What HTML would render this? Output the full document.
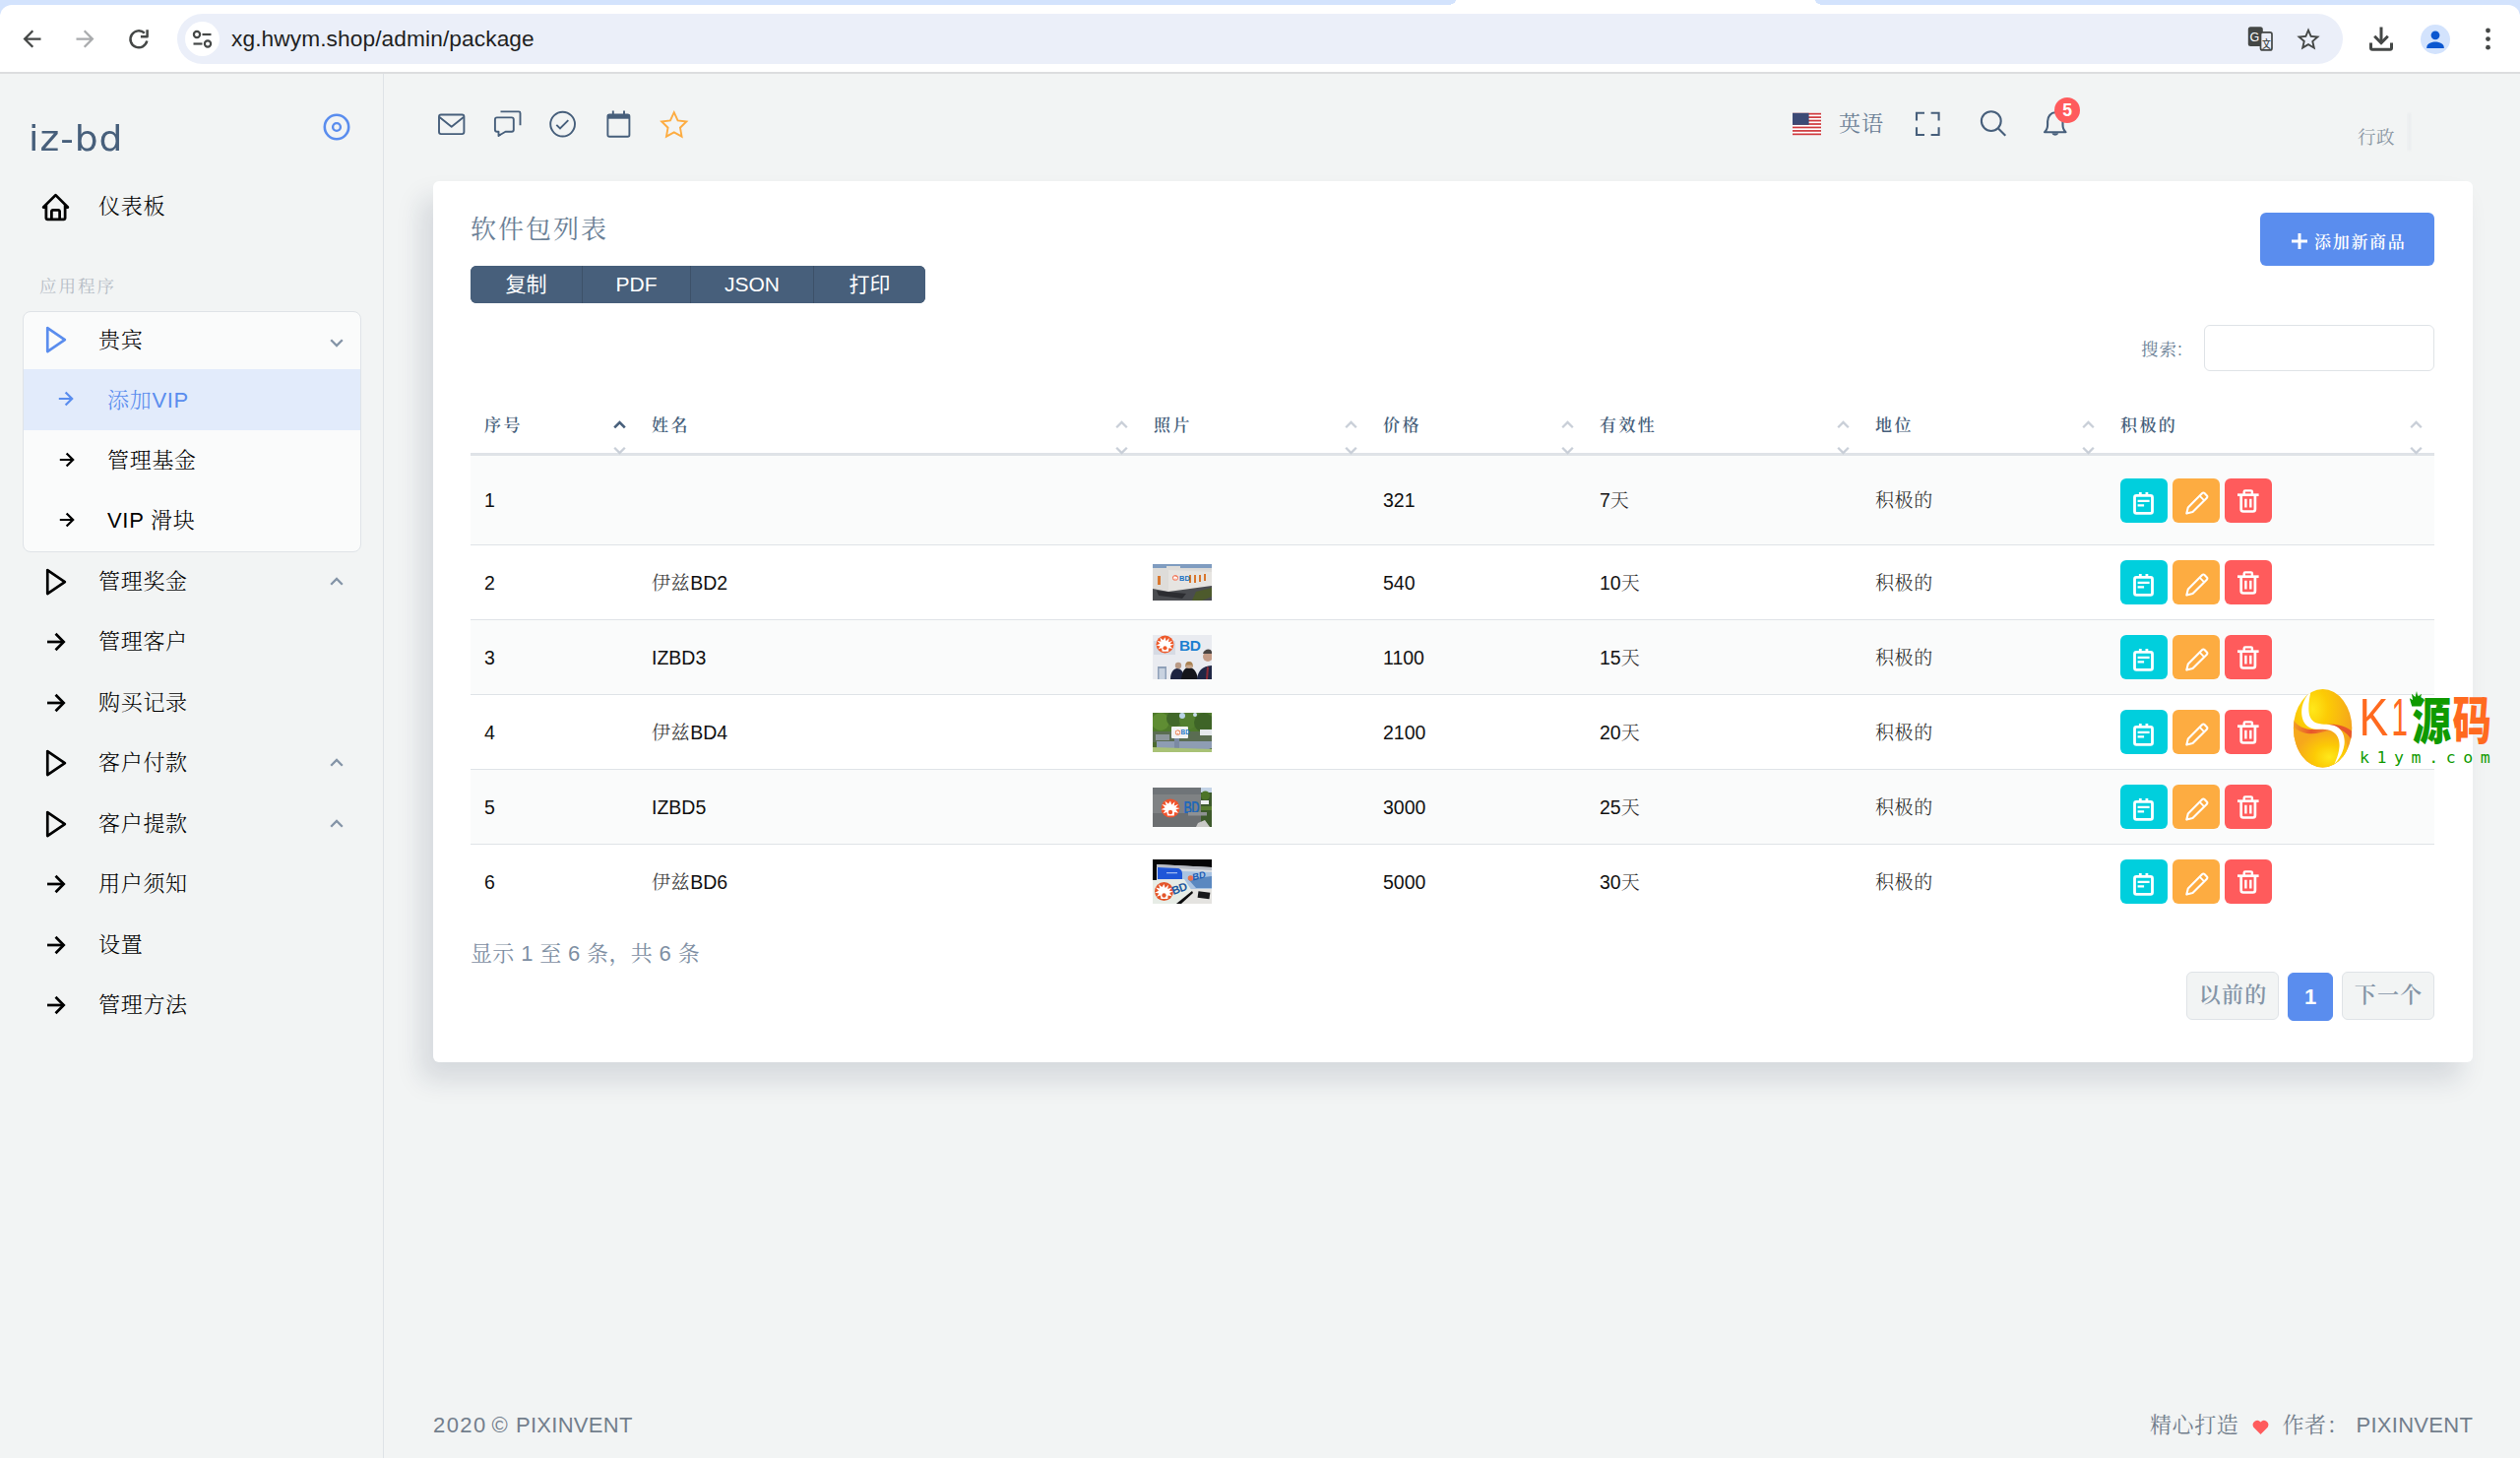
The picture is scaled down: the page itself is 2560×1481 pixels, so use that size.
<!DOCTYPE html>
<html lang="zh-CN">
<head>
<meta charset="utf-8">
<title>iz-bd - 软件包列表</title>
<style>
*{box-sizing:border-box;margin:0;padding:0}
html,body{width:2560px;height:1481px;overflow:hidden}
body{position:relative;background:#f2f4f4;font-family:"Liberation Sans","Noto Sans CJK SC",sans-serif;color:#111;-webkit-font-smoothing:antialiased}
.serif{font-family:"Liberation Sans","Noto Serif CJK SC",serif}
.abs{position:absolute}
svg{display:block;overflow:visible}

/* ---------- browser chrome ---------- */
#chrome{position:absolute;left:0;top:0;width:2560px;height:75px;background:#d3e3fd}
#chrome .bar{position:absolute;left:0;top:5px;width:2560px;height:69px;background:#fff;border-radius:12px 12px 0 0}
#chrome .tab{position:absolute;left:1479px;top:0;width:365px;height:10px;background:#fff}
#chrome .tabL{position:absolute;left:1471px;top:0;width:8px;height:5px;background:radial-gradient(ellipse 8px 5px at 0 0,#d3e3fd 96%,#fff 100%)}
#chrome .tabR{position:absolute;left:1844px;top:0;width:8px;height:5px;background:radial-gradient(ellipse 8px 5px at 100% 0,#d3e3fd 96%,#fff 100%)}
#chrome .line{position:absolute;left:0;top:73px;width:2560px;height:2px;background:#dcdddf}
#omni{position:absolute;left:180px;top:14px;width:2200px;height:51px;border-radius:26px;background:#ebeff9}
#omni .site{position:absolute;left:8px;top:8px;width:35px;height:35px;border-radius:50%;background:#fff}
#omni .url{position:absolute;left:55px;top:0;height:51px;line-height:50px;font-size:22.7px;color:#1f1f1f;letter-spacing:0.1px;white-space:nowrap}

/* ---------- sidebar ---------- */
#sidebar{position:absolute;left:0;top:75px;width:390px;height:1406px;border-right:1px solid #dfe3e7}
#brand{position:absolute;left:29px;top:37px;font-family:"DejaVu Sans","Liberation Sans",sans-serif;font-size:35px;line-height:56px;color:#475f7b;letter-spacing:.9px;transform:scaleX(1.075);transform-origin:0 0;margin-top:.8px}
.mi{position:absolute;left:0;width:390px;height:60px}
.mi .ic{position:absolute;left:41px;top:16px;width:28px;height:28px}
.mi .tx{position:absolute;left:100px;top:0;line-height:60px;font-size:22px;font-weight:300;color:#000;white-space:nowrap;letter-spacing:0.7px}
.mi .chev{position:absolute;left:335px;top:25px;width:14px;height:9px}
.mi.bx .chev{top:29px}
.mi.sub .ic{left:59.5px;top:21.5px;width:16px;height:16px}
.mi.sub .tx{left:109px}
.mi.active{background:#e2ebfb}
.mi.active .tx{color:#5a8dee}
.mi.bx{left:-24px}
.mi.bx.active{left:0;width:342px;margin-top:-1px;height:62px}
.mi.bx.active .tx{top:1px}
.mi.bx .tx{margin-top:.5px}
.mi.bx.active .ic{left:35px}.mi.bx.active .tx{left:85px}
.mi:not(.sub) .ic[viewBox="0 0 20 20"]{left:47px;top:20px;width:20px;height:20px}
#navhdr{position:absolute;left:40px;top:204px;font-size:17.5px;line-height:24px;color:#b6bdc6;letter-spacing:2px}
#vipbox{position:absolute;left:23px;top:241px;width:344px;height:245px;border:1px solid #dfe3e7;border-radius:8px;background:#fafbfb;overflow:hidden}

/* ---------- top navbar ---------- */
#topnav{position:absolute;left:390px;top:75px;width:2170px;height:109px}
#topnav .lang{position:absolute;left:1478px;top:34.5px;font-size:22px;line-height:32px;color:#6b7f96;letter-spacing:1px}
#topnav .user{position:absolute;left:2005px;top:51px;font-size:18.5px;line-height:28px;color:#8a96a3;letter-spacing:0.5px}
#badge{position:absolute;left:1697px;top:24px;width:26px;height:26px;border-radius:13px;background:#ff5b5c;color:#fff;font-size:17.5px;line-height:26px;text-align:center;font-weight:700}

/* ---------- card ---------- */
#card{position:absolute;left:440px;top:184px;width:2072px;height:895px;background:#fff;border-radius:6px;box-shadow:-12px 18px 27px 0 rgba(25,42,70,.13)}
#card h4{position:absolute;left:38px;top:30.5px;font-size:26px;line-height:36px;font-weight:400;color:#6b7f96;letter-spacing:2px}
#btns{position:absolute;left:38px;top:86px;height:38px;display:flex;border-radius:6px;overflow:hidden;background:#3d5169}
#btns span{display:block;height:38px;line-height:37px;text-align:center;color:#fff;font-size:21px;background:#475f7b;margin-right:1px}
#btns span:last-child{margin-right:0}
#addbtn{position:absolute;left:1856px;top:32px;width:177px;height:54px;border-radius:6px;background:#5a8dee;color:#fff}
#addbtn .t{position:absolute;left:55px;top:16px;font-size:17px;line-height:30px;font-weight:600;letter-spacing:1.7px;white-space:nowrap}
#srch{position:absolute;left:1799px;top:146px;width:234px;height:47px;border:1px solid #dfe3e7;border-radius:6px;background:#fff}
#srchl{position:absolute;left:1735px;top:155.5px;font-size:17.5px;line-height:30px;color:#6b7f96;letter-spacing:1px;white-space:nowrap}

table{position:absolute;left:38px;top:212px;width:1995px;border-collapse:separate;border-spacing:0;table-layout:fixed}
th{height:67px;text-align:left;padding:5px 0 0 14px;font-size:17px;font-weight:600;color:#475f7b;letter-spacing:2.4px;border-bottom:3px solid #dfe3e7;position:relative;vertical-align:middle}
th .s{position:absolute;right:12px;top:30px;width:13px;height:46px}
td{height:76px;line-height:24px;padding:0 0 0 14px;font-size:19.5px;color:#111;border-top:1px solid #dfe3e7;vertical-align:middle;white-space:nowrap}
tbody tr:first-child td{border-top:0;height:90px}
tbody tr:nth-child(odd){background:#fafbfb}
td .cj{font-family:"Noto Serif CJK SC",serif;font-weight:300;color:#2b2b2b;font-size:19px;letter-spacing:.6px;line-height:0}
td .acts{display:flex;gap:5px}
td .acts i{display:block;width:48px;height:45px;border-radius:6px;position:relative}
td .acts i svg{position:absolute;left:0;top:0;width:48px;height:45px}
.b1{background:#00cfdd}.b2{background:#fdac41}.b3{background:#ff5b5c}
.thumb{display:block;width:60px;overflow:hidden;margin-left:-1px}
#info{position:absolute;left:38px;top:766.5px;font-size:22px;line-height:36px;color:#7e8fa3;letter-spacing:0.35px;white-space:nowrap}
.pg{letter-spacing:1.3px;text-indent:1.3px;position:absolute;top:803px;height:49px;border-radius:6px;border:1px solid #dfe3e7;background:#f2f4f4;color:#8494a7;font-size:22px;font-weight:600;line-height:46px;text-align:center;white-space:nowrap}
.pg.on{background:#5a8dee;border-color:#5a8dee;color:#fff}

/* ---------- footer ---------- */
#foot{position:absolute;left:440px;top:1431px;width:2072px;height:34px;font-size:22px;line-height:34px;color:#727e8c}
#foot .f{position:absolute;top:0;white-space:nowrap}
</style>
</head>
<body>

<!-- ================= browser chrome ================= -->
<div id="chrome">
  <div class="bar"></div>
  <div class="tab"></div>
  <div class="tabL"></div>
  <div class="tabR"></div>
  <div id="omni">
    <div class="site"></div><svg class="abs" style="left:8px;top:8px" width="35" height="35" viewBox="0 0 35 35"><g fill="none" stroke="#444746" stroke-width="2.200"><circle cx="12" cy="13" r="3.100"/><path d="M17.500 13h9"/><circle cx="23" cy="22.500" r="3.100"/><path d="M8.500 22.500h9"/></g></svg>
    <div class="url">xg.hwym.shop/admin/package</div>
  </div>
  <div class="line"></div>
  <svg class="abs" style="left:18.800px;top:25.500px" width="27" height="27" viewBox="0 0 24 24"><path fill="#444746" d="M20 11H7.83l5.59-5.59L12 4l-8 8 8 8 1.41-1.41L7.83 13H20v-2z"/></svg>
  <svg class="abs" style="left:73px;top:25.500px" width="27" height="27" viewBox="0 0 24 24"><path fill="#a9abad" d="M12 4l-1.41 1.41L16.17 11H4v2h12.17l-5.58 5.59L12 20l8-8z"/></svg>
  <svg class="abs" style="left:125px;top:25px" width="30" height="30" viewBox="125 25 30 30"><g fill="none" stroke="#444746" stroke-width="2.500" stroke-linejoin="round"><path d="M149.300 41.600A8.500 8.500 0 1 1 146.800 33.600"/><path d="M149.600 30.300V37.300H142.900"/></g></svg>
  <svg class="abs" style="left:2330.500px;top:25.500px" width="28" height="28" viewBox="0 0 24 24"><path fill="#444746" d="M22 9.24l-7.19-.62L12 2 9.19 8.63 2 9.24l5.46 4.73L5.82 21 12 17.27 18.18 21l-1.63-7.03L22 9.24zM12 15.4l-3.76 2.27 1-4.28-3.32-2.88 4.38-.38L12 6.1l1.71 4.04 4.38.38-3.32 2.88 1 4.28L12 15.4z"/></svg>
  <svg class="abs" style="left:2405px;top:25px" width="28" height="28" viewBox="0 0 28 28"><g fill="none" stroke="#444746" stroke-width="3"><path d="M14 2.500v16"/><path d="M7.200 11.800l6.800 6.800 6.800-6.800" stroke-linejoin="miter"/><path d="M3.500 18.500v5.200a1.500 1.500 0 0 0 1.500 1.500h18a1.500 1.500 0 0 0 1.500-1.500v-5.200"/></g></svg>
  <div class="abs" style="left:2459px;top:25px;width:30px;height:30px;border-radius:50%;background:#d3e3fd"></div>
  <svg class="abs" style="left:2459px;top:25px" width="30" height="30" viewBox="0 0 30 30"><circle cx="15" cy="10.8" r="4.4" fill="#0b57d0"/><path fill="#0b57d0" d="M6.2 23.2c0-4.2 5.8-5.7 8.800-5.700s8.800 1.500 8.800 5.700v.8H6.200z"/></svg>
  <svg class="abs" style="left:2521px;top:25px" width="12" height="30" viewBox="0 0 12 30"><g fill="#444746"><circle cx="6.500" cy="6" r="2.400"/><circle cx="6.500" cy="14.600" r="2.400"/><circle cx="6.500" cy="23.200" r="2.400"/></g></svg>
  <svg class="abs" style="left:2283px;top:26px" width="28" height="28" viewBox="0 0 28 28"><rect x=".800" y="1.300" width="15" height="19.600" rx="2.500" fill="#444746"/><rect x="13.500" y="6.900" width="11.500" height="18" rx="2" fill="#ebeff9" stroke="#444746" stroke-width="1.700"/><text x="2.400" y="16.100" font-family="Liberation Sans,sans-serif" font-weight="400" font-size="12.500" fill="#fff">G</text><text transform="translate(14.900 22.600) scale(1 1.300)" font-family="Liberation Sans,Noto Sans CJK SC,sans-serif" font-weight="500" font-size="8.800" fill="#444746">文</text></svg>
</div>

<!-- ================= sidebar ================= -->
<aside id="sidebar">
  <div id="brand">iz-bd</div>
  <svg class="abs" style="left:327px;top:39px" width="30" height="30" viewBox="0 0 30 30"><g fill="none" stroke="#5a8dee"><circle cx="15" cy="15" r="12.200" stroke-width="2.600"/><circle cx="15" cy="15" r="3.900" stroke-width="2.400"/></g></svg>
  <div class="mi" style="top:105px"><svg class="ic" style="left:40px;top:13.500px;width:33px;height:33px" viewBox="0 0 24 24"><path fill="#000" d="M3 13h1v7c0 1.103.897 2 2 2h12c1.103 0 2-.897 2-2v-7h1a1 1 0 0 0 .707-1.707l-9-9a.999.999 0 0 0-1.414 0l-9 9A1 1 0 0 0 3 13zm7 7v-5h4v5h-4zm2-15.586 6 6V15l.001 5H16v-5c0-1.103-.897-2-2-2h-4c-1.103 0-2 .897-2 2v5H6v-9.586l6-6z"/></svg><span class="tx serif">仪表板</span></div>
  <div id="navhdr" class="serif">应用程序</div>
  <div id="vipbox">
    <div class="mi bx" style="top:-2px"><svg class="ic" viewBox="0 0 28 28"><path d="M7.250 2.100v24l17.600-12z" fill="none" stroke="#5a8dee" stroke-width="2.700" stroke-linejoin="round"/></svg><span class="tx serif">贵宾</span><svg class="chev" viewBox="0 0 14 9"><path d="M1.200 1.200l5.800 5.800 5.800-5.800" fill="none" stroke="#8494a7" stroke-width="2.300"/></svg></div>
    <div class="mi bx sub active" style="top:59px"><svg class="ic" viewBox="0 0 20 20"><g fill="none" stroke="#5a8dee" stroke-width="2.800"><path d="M1 10h16.500"/><path d="M9.500 1.800l8.200 8.200-8.200 8.200"/></g></svg><span class="tx serif">添加VIP</span></div>
    <div class="mi bx sub" style="top:120px"><svg class="ic" viewBox="0 0 20 20"><g fill="none" stroke="#000" stroke-width="2.800"><path d="M1 10h16.500"/><path d="M9.500 1.800l8.200 8.200-8.200 8.200"/></g></svg><span class="tx serif">管理基金</span></div>
    <div class="mi bx sub" style="top:181px"><svg class="ic" viewBox="0 0 20 20"><g fill="none" stroke="#000" stroke-width="2.800"><path d="M1 10h16.500"/><path d="M9.500 1.800l8.200 8.200-8.200 8.200"/></g></svg><span class="tx serif">VIP 滑块</span></div>
  </div>
  <div class="mi" style="top:486px"><svg class="ic" viewBox="0 0 28 28"><path d="M7.250 2.100v24l17.600-12z" fill="none" stroke="#000" stroke-width="2.700" stroke-linejoin="round"/></svg><span class="tx serif">管理奖金</span><svg class="chev" viewBox="0 0 14 9"><path d="M1.200 7.800l5.800-5.800 5.800 5.800" fill="none" stroke="#8494a7" stroke-width="2.300"/></svg></div>
  <div class="mi" style="top:547px"><svg class="ic" viewBox="0 0 20 20"><g fill="none" stroke="#000" stroke-width="2.700"><path d="M1 10h16.500"/><path d="M9.500 1.800l8.200 8.200-8.200 8.200"/></g></svg><span class="tx serif">管理客户</span></div>
  <div class="mi" style="top:609px"><svg class="ic" viewBox="0 0 20 20"><g fill="none" stroke="#000" stroke-width="2.700"><path d="M1 10h16.500"/><path d="M9.500 1.800l8.200 8.200-8.200 8.200"/></g></svg><span class="tx serif">购买记录</span></div>
  <div class="mi" style="top:670px"><svg class="ic" viewBox="0 0 28 28"><path d="M7.250 2.100v24l17.600-12z" fill="none" stroke="#000" stroke-width="2.700" stroke-linejoin="round"/></svg><span class="tx serif">客户付款</span><svg class="chev" viewBox="0 0 14 9"><path d="M1.200 7.800l5.800-5.800 5.800 5.800" fill="none" stroke="#8494a7" stroke-width="2.300"/></svg></div>
  <div class="mi" style="top:732px"><svg class="ic" viewBox="0 0 28 28"><path d="M7.250 2.100v24l17.600-12z" fill="none" stroke="#000" stroke-width="2.700" stroke-linejoin="round"/></svg><span class="tx serif">客户提款</span><svg class="chev" viewBox="0 0 14 9"><path d="M1.200 7.800l5.800-5.800 5.800 5.800" fill="none" stroke="#8494a7" stroke-width="2.300"/></svg></div>
  <div class="mi" style="top:793px"><svg class="ic" viewBox="0 0 20 20"><g fill="none" stroke="#000" stroke-width="2.700"><path d="M1 10h16.500"/><path d="M9.500 1.800l8.200 8.200-8.200 8.200"/></g></svg><span class="tx serif">用户须知</span></div>
  <div class="mi" style="top:855px"><svg class="ic" viewBox="0 0 20 20"><g fill="none" stroke="#000" stroke-width="2.700"><path d="M1 10h16.500"/><path d="M9.500 1.800l8.200 8.200-8.200 8.200"/></g></svg><span class="tx serif">设置</span></div>
  <div class="mi" style="top:916px"><svg class="ic" viewBox="0 0 20 20"><g fill="none" stroke="#000" stroke-width="2.700"><path d="M1 10h16.500"/><path d="M9.500 1.800l8.200 8.200-8.200 8.200"/></g></svg><span class="tx serif">管理方法</span></div>
</aside>

<!-- ================= top navbar ================= -->
<nav id="topnav">
  <svg class="abs" style="left:0;top:0" width="2170" height="109" viewBox="390 75 2170 109">
    <g fill="none" stroke="#475f7b" stroke-width="1.900" stroke-linejoin="round">
      <!-- mail -->
      <rect x="446" y="116.500" width="25.400" height="19.600" rx="2"/>
      <path d="M446.500 119l12.200 9.800 12.200-9.800"/>
      <!-- chat -->
      <path d="M508.500 113.400h18.500a1.500 1.500 0 0 1 1.500 1.500v12.300"/>
      <path d="M504.900 119.400h14.900a2 2 0 0 1 2 2v10.300a2 2 0 0 1-2 2h-6.300l-7 4.200v-4.200h-1.600a2 2 0 0 1-2-2v-10.300a2 2 0 0 1 2-2z"/>
      <!-- check circle -->
      <circle cx="571.600" cy="126.100" r="12.400"/>
      <path d="M565.300 126.800l3.700 3.700 8.300-8.300" stroke-linejoin="miter"/>
      <!-- calendar -->
      <rect x="617.400" y="116.400" width="22" height="22.300" rx="1.800"/>
      <path d="M622.800 112.500v4M634 112.500v4"/>
      <!-- fullscreen -->
      <g stroke-width="2.100" stroke-linejoin="miter"><path d="M1947 122.500v-7.700h8"/><path d="M1961.600 114.800h8v7.700"/><path d="M1969.600 129.300v7.700h-8"/><path d="M1955 137h-8v-7.700"/></g>
      <!-- search -->
      <circle cx="2022.800" cy="123.100" r="9.900" stroke-width="2.100"/>
      <path d="M2030 130.400l7.300 7.300" stroke-width="2.100"/>
      <!-- bell -->
      <path d="M2077 134.200c2.200-1.800 3.100-4.200 3.100-7.400v-3.600c0-4.800 3.300-8.900 7.700-8.900s7.700 4.100 7.700 8.900v3.600c0 3.200.900 5.600 3.100 7.400z" stroke-width="2.100"/>
    </g>
    <rect x="617.400" y="116.400" width="22" height="4.300" fill="#475f7b"/>
    <path d="M2084.400 135.200a3.500 3.500 0 0 0 6.800 0z" fill="#475f7b"/>
    <!-- star -->
    <path d="M684.750 114.200l3.800 8.200 8.800 1.100-6.400 6.200 1.600 8.900-7.800-4.300-7.800 4.300 1.600-8.900-6.400-6.200 8.800-1.100z" fill="none" stroke="#fdac41" stroke-width="1.900" stroke-linejoin="miter"/>
    <!-- flag -->
    <g>
      <rect x="1821" y="114.800" width="29" height="22.400" fill="#fff"/>
      <g fill="#cf3a3e"><rect x="1821" y="114.800" width="29" height="1.720"/><rect x="1821" y="118.250" width="29" height="1.720"/><rect x="1821" y="121.700" width="29" height="1.720"/><rect x="1821" y="125.150" width="29" height="1.720"/><rect x="1821" y="128.600" width="29" height="1.720"/><rect x="1821" y="132.050" width="29" height="1.720"/><rect x="1821" y="135.500" width="29" height="1.720"/></g>
      <rect x="1821" y="114.800" width="16.600" height="12.050" fill="#3c4a75"/>
    </g>
  </svg>
  <span class="lang serif">英语</span>
  <div id="badge">5</div>
  <span class="user serif">行政</span>
  <div class="abs" style="left:2056px;top:40px;width:3px;height:38px;background:rgba(190,198,210,.16);filter:blur(1px)"></div>
</nav>

<!-- ================= card ================= -->
<section id="card">
  <h4 class="serif">软件包列表</h4>
  <div id="btns"><span style="width:113px">复制</span><span style="width:109px">PDF</span><span style="width:124px">JSON</span><span style="width:113px">打印</span></div>
  <div id="addbtn"><svg class="abs" style="left:32px;top:20.500px" width="16" height="16" viewBox="0 0 16 16"><path d="M8 0v16M0 8h16" stroke="#fff" stroke-width="3" fill="none"/></svg><span class="t serif">添加新商品</span></div>
  <label id="srchl" class="serif">搜索:</label>
  <div id="srch"></div>
  <table>
    <thead><tr><th class="serif" style="width:170px">序号<svg class="s" viewBox="0 0 13 46"><path d="M1.200 8.300l5.300-5.300 5.300 5.300" fill="none" stroke="#475f7b" stroke-width="2.600"/><path d="M1.200 28.800l5.300 5.300 5.300-5.300" fill="none" stroke="#c9cfd8" stroke-width="2.300"/></svg></th><th class="serif" style="width:510px">姓名<svg class="s" viewBox="0 0 13 46"><path d="M1.200 8.300l5.300-5.300 5.300 5.300" fill="none" stroke="#c9cfd8" stroke-width="2.300"/><path d="M1.200 28.800l5.300 5.300 5.300-5.300" fill="none" stroke="#c9cfd8" stroke-width="2.300"/></svg></th><th class="serif" style="width:233px">照片<svg class="s" viewBox="0 0 13 46"><path d="M1.200 8.300l5.300-5.300 5.300 5.300" fill="none" stroke="#c9cfd8" stroke-width="2.300"/><path d="M1.200 28.800l5.300 5.300 5.300-5.300" fill="none" stroke="#c9cfd8" stroke-width="2.300"/></svg></th><th class="serif" style="width:220px">价格<svg class="s" viewBox="0 0 13 46"><path d="M1.200 8.300l5.300-5.300 5.300 5.300" fill="none" stroke="#c9cfd8" stroke-width="2.300"/><path d="M1.200 28.800l5.300 5.300 5.300-5.300" fill="none" stroke="#c9cfd8" stroke-width="2.300"/></svg></th><th class="serif" style="width:280px">有效性<svg class="s" viewBox="0 0 13 46"><path d="M1.200 8.300l5.300-5.300 5.300 5.300" fill="none" stroke="#c9cfd8" stroke-width="2.300"/><path d="M1.200 28.800l5.300 5.300 5.300-5.300" fill="none" stroke="#c9cfd8" stroke-width="2.300"/></svg></th><th class="serif" style="width:249px">地位<svg class="s" viewBox="0 0 13 46"><path d="M1.200 8.300l5.300-5.300 5.300 5.300" fill="none" stroke="#c9cfd8" stroke-width="2.300"/><path d="M1.200 28.800l5.300 5.300 5.300-5.300" fill="none" stroke="#c9cfd8" stroke-width="2.300"/></svg></th><th class="serif" style="width:333px">积极的<svg class="s" viewBox="0 0 13 46"><path d="M1.200 8.300l5.300-5.300 5.300 5.300" fill="none" stroke="#c9cfd8" stroke-width="2.300"/><path d="M1.200 28.800l5.300 5.300 5.300-5.300" fill="none" stroke="#c9cfd8" stroke-width="2.300"/></svg></th></tr></thead>
    <tbody>
      <tr><td>1</td><td></td><td></td><td>321</td><td>7<span class="cj">天</span></td><td><span class="cj">积极的</span></td><td><div class="acts"><i class="b1"><svg viewBox="0 0 48 45"><g fill="none" stroke="#fff"><rect x="14.500" y="17.400" width="18" height="18" rx="1.800" stroke-width="2.800"/><path d="M20.300 14v3.500M26.900 14v3.500" stroke-width="2.800"/><path d="M17.600 22.900h12M17.600 27.400h6.500" stroke-width="2.300"/></g></svg></i><i class="b2"><svg viewBox="0 0 48 45"><g fill="none" stroke="#fff" stroke-width="2.100" stroke-linejoin="round"><path d="M15.800 29.400L30.200 15a1.600 1.600 0 0 1 2.300 0l2.400 2.400a1.600 1.600 0 0 1 0 2.300L20.500 34.100l-6.200 1.500z"/><path d="M27.600 17.700l4.600 4.600" stroke-width="1.800"/></g></svg></i><i class="b3"><svg viewBox="0 0 48 45"><g fill="none" stroke="#fff"><path d="M13 16.700h21.600" stroke-width="2.700"/><path d="M19.700 16v-2.400a1.200 1.200 0 0 1 1.200-1.200h5.800a1.200 1.200 0 0 1 1.200 1.200v2.400" stroke-width="2.400"/><path d="M16.700 17.500v13.800a2.200 2.200 0 0 0 2.200 2.200h9.800a2.200 2.200 0 0 0 2.200-2.200v-13.800" stroke-width="2.700"/><path d="M21.400 20.800v8.600M26.300 20.800v8.600" stroke-width="2.400"/></g></svg></i></div></td></tr>
      <tr><td>2</td><td><span class="cj">伊兹</span>BD2</td><td><svg class="thumb" width="60" height="37" viewBox="0 0 60 37"><rect width="60" height="37" fill="#d9d8d6"/><rect width="60" height="4" fill="#7f9cc0"/><path d="M0 4h14v-2h14v3l32 1v17L16 28 0 25z" fill="#dedcd9"/><path d="M16 6l44 2v14L16 27z" fill="#e6e4e1"/><path d="M0 25l16 3 44-6v15H0z" fill="#4a4c50"/><path d="M44 28l16-4v9l-10 4H40z" fill="#4d5a2c"/><path d="M4 27l30 3-4 5-24-3z" fill="#2c2d31"/><g fill="#d9772e"><rect x="5" y="12" width="3" height="9"/><rect x="37" y="11" width="2" height="8"/><rect x="42" y="11" width="2" height="8"/><rect x="47" y="11" width="2" height="7"/><rect x="52" y="10" width="2" height="7"/></g><g transform="translate(23,14) scale(0.28)"><circle r="10" fill="#f0542d"/><path fill="#fff" d="M0-8l1.300 4.300 3.400-3.400-.8 4.500 4.600-1.700-2.900 3.600 4.400.6-4.200 1.800 2.700 3.300-4.300-.9-.2 3.900H-3.200l-.6-3.900-4 1.500 2.400-3.500-4.400-.9 4.100-2-3.300-3.300 4.500 1-1.300-4.600 3.600 3z"/><circle cy="4.200" r="2.300" fill="#f0542d"/></g><text x="27" y="17" font-family="Liberation Sans,sans-serif" font-weight="700" font-size="7.500" fill="#1c73c4">BD</text></svg></td><td>540</td><td>10<span class="cj">天</span></td><td><span class="cj">积极的</span></td><td><div class="acts"><i class="b1"><svg viewBox="0 0 48 45"><g fill="none" stroke="#fff"><rect x="14.500" y="17.400" width="18" height="18" rx="1.800" stroke-width="2.800"/><path d="M20.300 14v3.500M26.900 14v3.500" stroke-width="2.800"/><path d="M17.600 22.900h12M17.600 27.400h6.500" stroke-width="2.300"/></g></svg></i><i class="b2"><svg viewBox="0 0 48 45"><g fill="none" stroke="#fff" stroke-width="2.100" stroke-linejoin="round"><path d="M15.800 29.400L30.200 15a1.600 1.600 0 0 1 2.300 0l2.400 2.400a1.600 1.600 0 0 1 0 2.300L20.500 34.100l-6.200 1.500z"/><path d="M27.600 17.700l4.600 4.600" stroke-width="1.800"/></g></svg></i><i class="b3"><svg viewBox="0 0 48 45"><g fill="none" stroke="#fff"><path d="M13 16.700h21.600" stroke-width="2.700"/><path d="M19.700 16v-2.400a1.200 1.200 0 0 1 1.200-1.200h5.800a1.200 1.200 0 0 1 1.200 1.200v2.400" stroke-width="2.400"/><path d="M16.700 17.500v13.800a2.200 2.200 0 0 0 2.200 2.200h9.800a2.200 2.200 0 0 0 2.200-2.200v-13.800" stroke-width="2.700"/><path d="M21.400 20.800v8.600M26.300 20.800v8.600" stroke-width="2.400"/></g></svg></i></div></td></tr>
      <tr><td>3</td><td>IZBD3</td><td><svg class="thumb" width="60" height="45" viewBox="0 0 60 45"><rect width="60" height="45" fill="#e9ebf0"/><rect x="1" y="6" width="22" height="14" fill="#d6dae3"/><g transform="translate(12.5,9.5) scale(0.9)"><circle r="10" fill="#ee5a2b"/><path fill="#fff" d="M0-8l1.300 4.300 3.400-3.400-.8 4.500 4.600-1.700-2.900 3.600 4.400.6-4.200 1.800 2.700 3.300-4.300-.9-.2 3.900H-3.200l-.6-3.900-4 1.500 2.400-3.500-4.400-.9 4.100-2-3.300-3.300 4.500 1-1.300-4.600 3.600 3z"/><circle cy="4.200" r="2.300" fill="#ee5a2b"/></g><text x="27" y="16" font-family="Liberation Sans,sans-serif" font-weight="700" font-size="15.500" fill="#1b7fd0" letter-spacing="-.5">BD</text><rect x="5" y="32" width="9" height="13" fill="#8fa0b8"/><rect x="6.500" y="34" width="6" height="11" fill="#c8d2e0"/><path d="M18 45c0-7 3-11 7-11s7 4 7 11z" fill="#1d2440"/><circle cx="26" cy="31" r="3.200" fill="#b99a86"/><path d="M29 45c1-8 3-12 8-12s8 5 9 12z" fill="#15161b"/><circle cx="37" cy="30.500" r="3.600" fill="#c9a78d"/><path d="M33.500 30c0-4 7-4 7 0l.5 4-1.500-3.500h-5L33 34z" fill="#a98251"/><path d="M45 45c1-9 5-13 15-14v14z" fill="#1f2745"/><circle cx="56" cy="22" r="5" fill="#c49c87"/><path d="M51 19c1-5 8-6 9-2v2z" fill="#4a4542"/><path d="M55 32l2 1-1 12h-2z" fill="#8c2a35"/></svg></td><td>1100</td><td>15<span class="cj">天</span></td><td><span class="cj">积极的</span></td><td><div class="acts"><i class="b1"><svg viewBox="0 0 48 45"><g fill="none" stroke="#fff"><rect x="14.500" y="17.400" width="18" height="18" rx="1.800" stroke-width="2.800"/><path d="M20.300 14v3.500M26.900 14v3.500" stroke-width="2.800"/><path d="M17.600 22.900h12M17.600 27.400h6.500" stroke-width="2.300"/></g></svg></i><i class="b2"><svg viewBox="0 0 48 45"><g fill="none" stroke="#fff" stroke-width="2.100" stroke-linejoin="round"><path d="M15.800 29.400L30.200 15a1.600 1.600 0 0 1 2.300 0l2.400 2.400a1.600 1.600 0 0 1 0 2.300L20.500 34.100l-6.200 1.500z"/><path d="M27.600 17.700l4.600 4.600" stroke-width="1.800"/></g></svg></i><i class="b3"><svg viewBox="0 0 48 45"><g fill="none" stroke="#fff"><path d="M13 16.700h21.600" stroke-width="2.700"/><path d="M19.700 16v-2.400a1.200 1.200 0 0 1 1.200-1.200h5.800a1.200 1.200 0 0 1 1.200 1.200v2.400" stroke-width="2.400"/><path d="M16.700 17.500v13.800a2.200 2.200 0 0 0 2.200 2.200h9.800a2.200 2.200 0 0 0 2.200-2.200v-13.800" stroke-width="2.700"/><path d="M21.400 20.800v8.600M26.300 20.800v8.600" stroke-width="2.400"/></g></svg></i></div></td></tr>
      <tr><td>4</td><td><span class="cj">伊兹</span>BD4</td><td><svg class="thumb" width="60" height="40" viewBox="0 0 60 40"><rect width="60" height="40" fill="#4c6b2e"/><path d="M0 0h60v22H0z" fill="#4f7a2c"/><circle cx="8" cy="9" r="9" fill="#5f8d33"/><circle cx="22" cy="6" r="8" fill="#41682a"/><circle cx="36" cy="8" r="9" fill="#537f30"/><circle cx="52" cy="10" r="10" fill="#3e6427"/><circle cx="30" cy="3" r="3" fill="#b9d3e6"/><circle cx="43" cy="2" r="2" fill="#c9dcec"/><path d="M0 19h60v11H0z" fill="#5a6d52"/><rect x="48" y="17" width="12" height="6" fill="#e4e8ec"/><rect x="3" y="22" width="14" height="6" fill="#8d979c"/><rect x="19" y="14" width="17" height="12" rx="1" fill="#f1f2f4"/><g transform="translate(25.5,20) scale(0.26)"><circle r="10" fill="#e8682f"/><path fill="#fff" d="M0-8l1.300 4.300 3.400-3.400-.8 4.500 4.600-1.700-2.900 3.600 4.400.6-4.200 1.800 2.700 3.300-4.300-.9-.2 3.900H-3.200l-.6-3.900-4 1.500 2.400-3.500-4.400-.9 4.100-2-3.300-3.300 4.500 1-1.300-4.600 3.600 3z"/><circle cy="4.200" r="2.300" fill="#e8682f"/></g><text x="28.500" y="22.300" font-family="Liberation Sans,sans-serif" font-weight="700" font-size="6.500" fill="#2a7ac6">BD</text><path d="M4 29h18v-3h4v3h34v7l-6 2H4z" fill="#8e9db3"/><path d="M22 26h5v10h-5z" fill="#7b8aa3"/><path d="M0 35l60 2v3H0z" fill="#a9c276"/></svg></td><td>2100</td><td>20<span class="cj">天</span></td><td><span class="cj">积极的</span></td><td><div class="acts"><i class="b1"><svg viewBox="0 0 48 45"><g fill="none" stroke="#fff"><rect x="14.500" y="17.400" width="18" height="18" rx="1.800" stroke-width="2.800"/><path d="M20.300 14v3.500M26.900 14v3.500" stroke-width="2.800"/><path d="M17.600 22.900h12M17.600 27.400h6.500" stroke-width="2.300"/></g></svg></i><i class="b2"><svg viewBox="0 0 48 45"><g fill="none" stroke="#fff" stroke-width="2.100" stroke-linejoin="round"><path d="M15.800 29.400L30.200 15a1.600 1.600 0 0 1 2.300 0l2.400 2.400a1.600 1.600 0 0 1 0 2.300L20.500 34.100l-6.200 1.500z"/><path d="M27.600 17.700l4.600 4.600" stroke-width="1.800"/></g></svg></i><i class="b3"><svg viewBox="0 0 48 45"><g fill="none" stroke="#fff"><path d="M13 16.700h21.600" stroke-width="2.700"/><path d="M19.700 16v-2.400a1.200 1.200 0 0 1 1.200-1.200h5.800a1.200 1.200 0 0 1 1.200 1.200v2.400" stroke-width="2.400"/><path d="M16.700 17.500v13.800a2.200 2.200 0 0 0 2.200 2.200h9.800a2.200 2.200 0 0 0 2.200-2.200v-13.800" stroke-width="2.700"/><path d="M21.400 20.800v8.600M26.300 20.800v8.600" stroke-width="2.400"/></g></svg></i></div></td></tr>
      <tr><td>5</td><td>IZBD5</td><td><svg class="thumb" width="60" height="40" viewBox="0 0 60 40"><rect width="60" height="40" fill="#777a7c"/><path d="M0 0h49v40H0z" fill="#7f8284"/><path d="M0 26h49v14H0z" fill="#6c6f71"/><path d="M0 0h49v7H0z" fill="#6f7478"/><rect x="49" y="0" width="11" height="40" fill="#3d5a2c"/><rect x="49" y="0" width="11" height="5" fill="#c4d4e6"/><circle cx="53.500" cy="8" r="4.500" fill="#4c7428"/><rect x="49" y="13" width="8" height="4" fill="#eef0f2"/><rect x="49" y="19" width="11" height="4" fill="#587c30"/><path d="M46 36l7-3 5 7H44z" fill="#c9c9c7"/><g transform="translate(18,21) scale(0.95)"><circle r="10" fill="#f0532c"/><path fill="#fff" d="M0-8l1.300 4.300 3.400-3.400-.8 4.500 4.600-1.700-2.900 3.600 4.400.6-4.200 1.800 2.700 3.300-4.300-.9-.2 3.900H-3.200l-.6-3.900-4 1.500 2.400-3.500-4.400-.9 4.100-2-3.300-3.300 4.500 1-1.300-4.600 3.600 3z"/><circle cy="4.200" r="2.300" fill="#f0532c"/></g><text transform="translate(31.500 26) scale(.680 1)" font-family="Liberation Sans,sans-serif" font-weight="700" font-size="17" fill="#2268b8" letter-spacing="-.8">BD</text><rect x="36" y="25" width="19" height="3.500" fill="#8e9194"/></svg></td><td>3000</td><td>25<span class="cj">天</span></td><td><span class="cj">积极的</span></td><td><div class="acts"><i class="b1"><svg viewBox="0 0 48 45"><g fill="none" stroke="#fff"><rect x="14.500" y="17.400" width="18" height="18" rx="1.800" stroke-width="2.800"/><path d="M20.300 14v3.500M26.900 14v3.500" stroke-width="2.800"/><path d="M17.600 22.900h12M17.600 27.400h6.500" stroke-width="2.300"/></g></svg></i><i class="b2"><svg viewBox="0 0 48 45"><g fill="none" stroke="#fff" stroke-width="2.100" stroke-linejoin="round"><path d="M15.800 29.400L30.200 15a1.600 1.600 0 0 1 2.300 0l2.400 2.400a1.600 1.600 0 0 1 0 2.300L20.500 34.100l-6.200 1.500z"/><path d="M27.600 17.700l4.600 4.600" stroke-width="1.800"/></g></svg></i><i class="b3"><svg viewBox="0 0 48 45"><g fill="none" stroke="#fff"><path d="M13 16.700h21.600" stroke-width="2.700"/><path d="M19.700 16v-2.400a1.200 1.200 0 0 1 1.200-1.200h5.800a1.200 1.200 0 0 1 1.200 1.200v2.400" stroke-width="2.400"/><path d="M16.700 17.500v13.800a2.200 2.200 0 0 0 2.200 2.200h9.800a2.200 2.200 0 0 0 2.200-2.200v-13.800" stroke-width="2.700"/><path d="M21.400 20.800v8.600M26.300 20.800v8.600" stroke-width="2.400"/></g></svg></i></div></td></tr>
      <tr><td>6</td><td><span class="cj">伊兹</span>BD6</td><td><svg class="thumb" width="60" height="45" viewBox="0 0 60 45"><rect width="60" height="45" fill="#050506"/><path d="M4 5l56 3v37H4z" fill="#d9dde2"/><path d="M4 5l56 3v3L4 8z" fill="#b8bcc4"/><path d="M5 8l20 1a5 5 0 0 1 5 5v6H5z" fill="#1f56d8"/><rect x="14" y="13" width="11" height="1.300" fill="#9db7f0"/><path d="M30 12l30 1v20H30z" fill="#a9c3e2"/><path d="M36 20l24-3v12H44z" fill="#5b88c0"/><circle cx="38.500" cy="19" r="2.800" fill="#e9734a"/><text x="41" y="21.500" font-family="Liberation Sans,sans-serif" font-weight="700" font-style="italic" font-size="9.500" fill="#1d5cb4" transform="rotate(-14 41 21)">BD</text><path d="M30 30h30v15H30z" fill="#e4e3e0"/><rect x="46" y="33" width="12" height="6.500" fill="#17181a" transform="rotate(8 52 36)"/><path d="M0 21l32-1 8 12-16 13H0z" fill="#e7ece6"/><path d="M24 45l16-13 1 2-12 11z" fill="#0c0c0d"/><g transform="translate(11.5,32.5) scale(0.95)"><circle r="10" fill="#e4562b"/><path fill="#fff" d="M0-8l1.300 4.300 3.400-3.400-.8 4.500 4.600-1.700-2.900 3.600 4.400.6-4.200 1.800 2.700 3.300-4.300-.9-.2 3.900H-3.200l-.6-3.900-4 1.500 2.400-3.500-4.400-.9 4.100-2-3.300-3.300 4.500 1-1.300-4.600 3.600 3z"/><circle cy="4.200" r="2.300" fill="#e4562b"/></g><text x="21" y="36" font-family="Liberation Sans,sans-serif" font-weight="700" font-size="11.500" fill="#1f5a9e" transform="rotate(-20 21 36)" letter-spacing="-.6">BD</text></svg></td><td>5000</td><td>30<span class="cj">天</span></td><td><span class="cj">积极的</span></td><td><div class="acts"><i class="b1"><svg viewBox="0 0 48 45"><g fill="none" stroke="#fff"><rect x="14.500" y="17.400" width="18" height="18" rx="1.800" stroke-width="2.800"/><path d="M20.300 14v3.500M26.900 14v3.500" stroke-width="2.800"/><path d="M17.600 22.900h12M17.600 27.400h6.500" stroke-width="2.300"/></g></svg></i><i class="b2"><svg viewBox="0 0 48 45"><g fill="none" stroke="#fff" stroke-width="2.100" stroke-linejoin="round"><path d="M15.800 29.400L30.200 15a1.600 1.600 0 0 1 2.300 0l2.400 2.400a1.600 1.600 0 0 1 0 2.300L20.500 34.100l-6.200 1.500z"/><path d="M27.600 17.700l4.600 4.600" stroke-width="1.800"/></g></svg></i><i class="b3"><svg viewBox="0 0 48 45"><g fill="none" stroke="#fff"><path d="M13 16.700h21.600" stroke-width="2.700"/><path d="M19.700 16v-2.400a1.200 1.200 0 0 1 1.200-1.200h5.800a1.200 1.200 0 0 1 1.200 1.200v2.400" stroke-width="2.400"/><path d="M16.700 17.500v13.800a2.200 2.200 0 0 0 2.200 2.200h9.800a2.200 2.200 0 0 0 2.200-2.200v-13.800" stroke-width="2.700"/><path d="M21.400 20.800v8.600M26.300 20.800v8.600" stroke-width="2.400"/></g></svg></i></div></td></tr>
    </tbody>
  </table>
  <div id="info" class="serif">显示 1 至 6 条，共 6 条</div>
  <div class="pg serif" style="left:1781px;width:94px">以前的</div>
  <div class="pg on" style="left:1884px;width:46px;top:804px;height:49px;line-height:47px;font-weight:700">1</div>
  <div class="pg serif" style="left:1939px;width:94px">下一个</div>
</section>

<!-- ================= footer ================= -->
<footer id="foot">
  <span class="f" style="left:0;letter-spacing:1.4px">2020</span>
  <span class="f" style="left:59.500px">©</span>
  <span class="f" style="left:84px;letter-spacing:.28px">PIXINVENT</span>
  <span class="f serif" style="left:1744px;letter-spacing:.6px">精心打造</span>
  <svg class="abs" style="left:1847.500px;top:10.500px" width="17" height="15" viewBox="0 0 17 15"><path fill="#ff5b5c" d="M8.500 15L1.300 7.700A4.500 4.500 0 0 1 8.500 2.400 4.500 4.500 0 0 1 15.700 7.700z"/></svg>
  <span class="f serif" style="left:1878.500px;letter-spacing:.6px">作者：</span>
  <span class="f" style="left:1953.500px;letter-spacing:.28px">PIXINVENT</span>
</footer>

<!-- ================= watermark ================= -->
<svg id="wm" class="abs" style="left:2320px;top:690px" width="220" height="100" viewBox="2320 690 220 100">
  <defs>
    <radialGradient id="g1" cx="0.33" cy="0.25" r="0.75"><stop offset="0" stop-color="#ffe81a"/><stop offset="0.35" stop-color="#fccb05"/><stop offset="1" stop-color="#f4a020"/></radialGradient>
    <radialGradient id="g2" cx="0.68" cy="0.75" r="0.6"><stop offset="0" stop-color="#ffe81a"/><stop offset="0.45" stop-color="#fccb05"/><stop offset="1" stop-color="#f6a81c"/></radialGradient>
    <linearGradient id="g3" x1="0" y1="0" x2="1" y2="0"><stop offset="0" stop-color="#f3a326"/><stop offset="0.45" stop-color="#e8562a"/><stop offset="1" stop-color="#f09a2a"/></linearGradient>
    <clipPath id="egg"><ellipse cx="2359.600" cy="739.800" rx="29.700" ry="39.800"/></clipPath>
  </defs>
  <ellipse cx="2359.600" cy="739.800" rx="29.700" ry="39.800" fill="url(#g1)"/>
  <g clip-path="url(#egg)">
    <path d="M2329 736c8 8 20 9 31 6s22 1 24 14c2 10-4 20-12 24h-44z" fill="url(#g2)"/>
    <path d="M2329.500 731c5 8 15 11.500 27 9.500 6-1 11-.500 15 1.500-5-.300-9 .500-14 2-12 3.500-24 0-29-8z" fill="url(#g3)"/>
    <path d="M2360 736.500c10-2 22 0 29.500 6.500l-.500 9c-5-9-14-13.500-23-14z" fill="#e8582b"/>
    <path d="M2347.500 702.500c-7 6-10.500 16-9 25 1.200 7 5 11.500 12 13 6 1.300 13-.500 18 2 6 3 8.500 9 8 16-.400 6-2.500 12-5 17.500 5-5 9-12 10-19.500 1-8-1.500-15-8-18.500-6-3.200-14-1.500-20-3.500-5-1.700-7.500-6-8-11.500-.600-7 .500-14 2-20.500z" fill="#fff"/>
  </g>
  <g font-family="Liberation Sans,sans-serif" fill="#ff6a1f">
    <text transform="translate(2396.500 747) scale(0.840 1)" font-size="53">K</text>
    <text transform="translate(2429.500 747) scale(0.560 1)" font-size="53">1</text>
  </g>
  <g font-family="Noto Sans CJK SC,sans-serif" font-weight="900">
    <text transform="translate(2450.500 751) scale(0.760 1)" font-size="52" fill="#0f9a00">源</text>
    <text transform="translate(2491.500 751) scale(0.760 1)" font-size="52" fill="#ff6a1f">码</text>
  </g>
  <path d="M2455 702l1.300 6 3.600-3.300-1.200 6.200 3.300-1.700-2.400 8.200h-9.400l-2.400-8.200 3.300 1.700-1.200-6.200 3.600 3.300z" fill="#0f9a00"/>
  <text x="2397" y="774.500" font-family="DejaVu Sans Mono,Liberation Mono,monospace" font-size="16.500" letter-spacing="7.600" fill="#0f9a00">k1ym.com</text>
</svg>

</body>
</html>
